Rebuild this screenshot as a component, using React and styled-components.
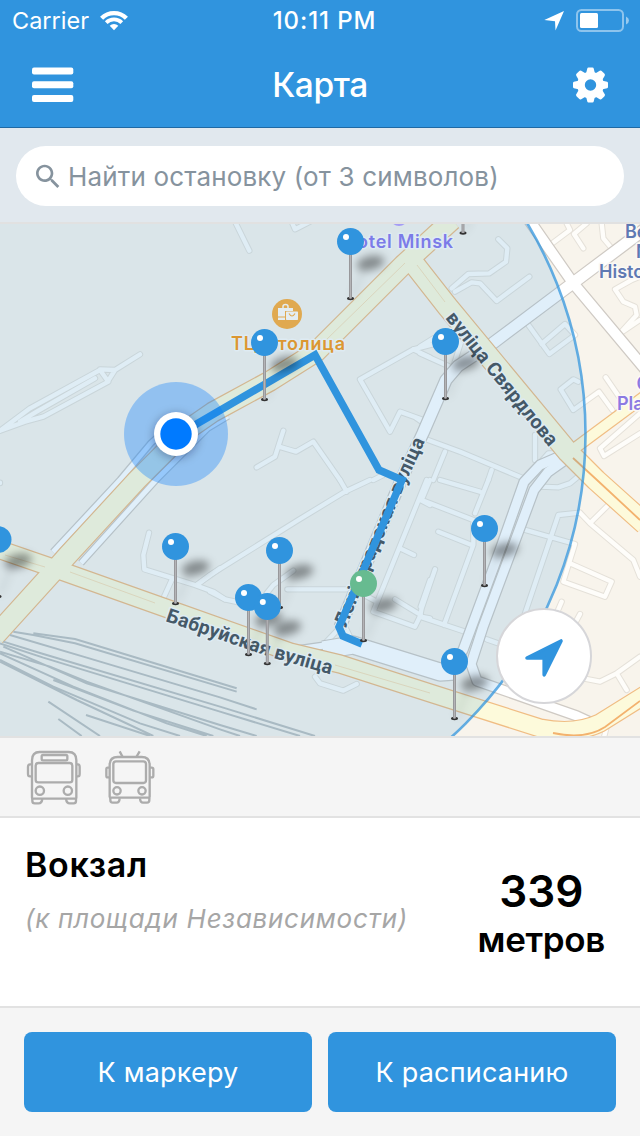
import React from "react";
import styled, { createGlobalStyle } from "styled-components";

const GlobalStyle = createGlobalStyle`
  * { box-sizing: border-box; }
  body { margin: 0; background: #f5f5f5; }
`;

const BLUE = "#3094de";

const Screen = styled.div`
  display: flex;
  flex-direction: column;
  width: 640px;
  height: 1136px;
  overflow: hidden;
  font-family: Inter, "Liberation Sans", sans-serif;
  background: #f5f5f5;
  white-space: nowrap;
`;

const Header = styled.header`
  height: 128px;
  background: ${BLUE};
  border-bottom: 1px solid #2069a3;
  color: #fff;
`;

const StatusBar = styled.div`
  display: grid;
  grid-template-columns: 1fr auto 1fr;
  align-items: center;
  height: 41px;
  padding: 0 11px 0 12px;
  font-size: 24px;
  line-height: 42px;
`;

const StatusSide = styled.div`
  display: flex;
  align-items: center;
  height: 41px;
  gap: ${(p) => p.$gap}px;
  justify-content: ${(p) => (p.$end ? "flex-end" : "flex-start")};
`;

const Carrier = styled.span`
  font-size: 23.5px;
`;

const Clock = styled.span`
  font-weight: 500;
  letter-spacing: 0.9px;
  padding-left: 8px;
`;

const NavBar = styled.div`
  display: grid;
  grid-template-columns: 42px 1fr 36px;
  align-items: center;
  height: 88px;
  padding: 0 32px;
`;

const Title = styled.h1`
  margin: 0;
  padding-right: 6px;
  text-align: center;
  font-size: 33.500px;
  font-weight: 500;
  letter-spacing: -0.4px;
  line-height: 86px;
`;

const IconButton = styled.button`
  display: flex;
  padding: 0;
  border: 0;
  background: none;
  color: inherit;
`;

const SearchBar = styled.div`
  height: 96px;
  padding: 18px 16px 0;
  background: #e1e8ee;
  border-bottom: 2px solid #e1e1e1;
`;

const SearchField = styled.div`
  display: flex;
  align-items: center;
  gap: 4px;
  height: 60px;
  padding-left: 16px;
  border-radius: 30px;
  background: #fff;
  color: #86939e;
  font-size: 26px;
  letter-spacing: 0.15px;
`;

const MapArea = styled.div`
  position: relative;
  height: 512px;
  overflow: hidden;
`;

const MapCanvas = styled.svg`
  display: block;
`;

const LocateButton = styled.button`
  position: absolute;
  right: 48px;
  bottom: 32px;
  width: 96px;
  height: 96px;
  padding: 0;
  border: 2px solid #d6d6d9;
  border-radius: 50%;
  background: #fff;
`;

const TransportRow = styled.div`
  display: flex;
  gap: 24px;
  height: 82px;
  padding: 11px 26px 0;
  border-top: 2px solid #e2e2e2;
  border-bottom: 2px solid #e2e2e2;
`;

const StopCard = styled.section`
  display: flex;
  justify-content: space-between;
  height: 190px;
  padding: 0 35px 0 25px;
  background: #fff;
  border-bottom: 2px solid #e2e2e2;
`;

const StopInfo = styled.div`
  padding-top: 26px;
`;

const StopName = styled.h2`
  margin: 0;
  font-size: 34px;
  line-height: 42px;
  font-weight: 600;
  letter-spacing: 0.7px;
`;

const Direction = styled.p`
  margin: 16px 0 0;
  font-size: 26px;
  line-height: 34px;
  font-style: italic;
  letter-spacing: 0.72px;
  color: #a6a6a6;
`;

const Distance = styled.div`
  padding-top: 47px;
  text-align: center;
  font-weight: 600;
`;

const DistanceValue = styled.div`
  font-size: 44px;
  line-height: 52px;
`;

const DistanceUnit = styled.div`
  font-size: 35px;
  line-height: 44px;
  letter-spacing: -0.35px;
`;

const Footer = styled.footer`
  display: flex;
  gap: 16px;
  padding: 24px;
  height: 128px;
`;

const ActionButton = styled.button`
  flex: 1;
  height: 80px;
  padding: 0;
  border: 0;
  border-radius: 8px;
  background: ${BLUE};
  color: #fff;
  font: 400 27px Inter, "Liberation Sans", sans-serif;
  letter-spacing: 0.2px;
`;

const WifiIcon = () => (
  <svg width="28" height="22" viewBox="101 10 28 22" fill="none" stroke="#fff">
    <path d="M102.6 18.2a17.6 17.6 0 0 1 24.8 0" strokeWidth="4.4" />
    <path d="M107.2 22.6a11.2 11.2 0 0 1 15.6 0" strokeWidth="3.8" />
    <path d="M115 30.2l-4.3-4.5a6.3 6.3 0 0 1 8.6 0z" fill="#fff" stroke="none" />
  </svg>
);

const StatusArrow = () => (
  <svg width="20" height="20" viewBox="544 11 20 20" fill="#fff">
    <path d="M564 11L555.5 30.6L555 21.2L544.3 20z" />
  </svg>
);

const Battery = () => (
  <svg width="53" height="24" viewBox="576 9 53 24">
    <rect x="577" y="10" width="46" height="21" rx="4.5" fill="none" stroke="#fff" strokeOpacity=".45" strokeWidth="2" />
    <rect x="580" y="13" width="18" height="15" rx="1.5" fill="#fff" />
    <path d="M626 16.5q3 1.5 3 4t-3 4z" fill="#fff" fillOpacity=".5" />
  </svg>
);

const MenuIcon = () => (
  <svg width="42" height="36" viewBox="0 0 42 36" fill="#fff">
    <rect y=".5" width="41.3" height="7" rx="2" />
    <rect y="14.3" width="41.3" height="7" rx="2" />
    <rect y="28" width="41.3" height="7" rx="2" />
  </svg>
);

const GearIcon = () => (
  <svg width="36" height="36" viewBox="-18.500 -18 36 36" fill="#fff">
    <circle r="9.500" fill="none" stroke="#fff" strokeWidth="7.600" />
    {[0, 90, 180, 270].map((a) => (
      <path key={a} transform={`rotate(${a})`} d="M-4.6 -11L-3.2 -16.6Q-3 -17.5 -2 -17.5H2Q3 -17.5 3.2 -16.6L4.6 -11z" />
    ))}
    {[45, 135, 225, 315].map((a) => (
      <path key={a} transform={`rotate(${a})`} d="M-5 -11L-3.5 -16.6Q-3 -17.8 -2 -17.8H2Q3 -17.8 3.5 -16.6L5 -11z" />
    ))}
  </svg>
);

const SearchIcon = () => (
  <svg width="32" height="32" viewBox="0 -.500 24 24" fill="currentColor">
    <path d="M15.5 14h-.79l-.28-.27C15.41 12.59 16 11.11 16 9.5 16 5.91 13.09 3 9.5 3S3 5.91 3 9.5 5.91 16 9.5 16c1.61 0 3.09-.59 4.23-1.57l.27.28v.79l5 4.99L20.49 19l-4.99-5zm-6 0C7.01 14 5 11.99 5 9.5S7.01 5 9.5 5 14 7.01 14 9.5 11.99 14 9.5 14z" />
  </svg>
);

const BusIcon = () => (
  <svg width="55" height="56" viewBox="78 42 165 168" fill="none" stroke="#acacac" strokeWidth="7">
    <path d="M96 188V76Q96 51 119 51H206Q229 51 229 76V188Q229 191 225 191H100Q96 191 96 188z" />
    <rect x="125" y="60" width="77" height="16" rx="4" />
    <rect x="107" y="84" width="110" height="58" rx="8" />
    <circle cx="119.500" cy="167" r="12.500" />
    <circle cx="203.500" cy="167" r="12.500" />
    <path d="M96 88H90Q84 88 84 96V116Q84 124 90 124H96M229 88H234Q239 88 239 96V116Q239 124 234 124H229" />
    <path d="M97 190V198Q97 205 104 205H116Q125 205 127 192M228 190V198Q228 205 221 205H209Q200 205 198 192" />
  </svg>
);

const TrolleyIcon = () => (
  <svg width="50" height="56" viewBox="315 42 150 168" fill="none" stroke="#acacac" strokeWidth="7">
    <path d="M329 185V90Q329 66 353 66H425Q449 66 449 90V185Q449 188 445 188H333Q329 188 329 185z" />
    <rect x="340" y="79" width="98" height="65" rx="8" />
    <circle cx="351" cy="167.500" r="11" />
    <circle cx="426" cy="167.500" r="11" />
    <path d="M359 49L368 66M419 49L409 66M329 98H323Q319 98 319 103V122Q319 127 323 127H329M449 98H455Q460 98 460 103V122Q460 127 455 127H449" />
    <path d="M331 188V195Q331 203 338 203H350Q358 203 359 190M448 188V195Q448 203 441 203H429Q421 203 420 190" />
  </svg>
);

const LocateIcon = () => (
  <svg width="92" height="92" viewBox="498 611 92 92">
    <path d="M561 642L544.2 675.8V659H527z" fill={BLUE} stroke={BLUE} strokeWidth="3.600" strokeLinejoin="round" />
  </svg>
);

/* Streets are stored per survey sheet, three units to a pixel. */
const sheets = [
  {
    x: 0, y: 220, w: 13,
    d: "M0 632L90 565L300 450L325 485L130 590L75 605L0 632M60 605L110 575L285 475M300 448L345 450L420 403M345 450L325 482",
  },
  {
    x: 210, y: 220, w: 13,
    d: "M75 5L118 92M245 5L255 28L300 5M700 365L610 388L450 478L540 635L570 575L640 600M610 388L660 412M140 742L195 710L220 632M207 680L258 695L310 665L390 780M490 780L520 765",
  },
  {
    x: 420, y: 220, w: 13,
    d: "M235 58L262 85L258 125L208 160L145 162L95 205M105 215L155 187L180 190L230 243L328 170M318 305L388 402L465 345L435 312L365 372M475 485L460 478L422 508L460 570L537 515L577 570M557 472L597 530M390 75L450 30L440 10M490 85L462 42L500 10M545 10L550 55L575 85M660 170L635 180L585 208L610 245L645 260L650 285L600 340L660 300M660 580L540 685L552 708L660 640M0 400L85 438M0 380L40 355M125 360L100 440M10 655L120 695L310 775M75 695L40 780M215 750L205 780M345 645L345 720M350 740L385 700L430 700M-10 595L12 610",
  },
  {
    x: 0, y: 480, w: 13,
    d: "M447 158L430 225L433 268L585 315L640 335L675 358M515 300L490 355M590 315L660 265M0 8L0 9",
  },
  {
    x: 210, y: 480, w: 13,
    d: "M-40 315L0 285L265 120L405 35L480 0M390 0L410 35M0 335L45 358L100 370M170 340L190 315L250 272M232 328L430 328L500 365M650 0L490 395L615 440L632 405L555 358M632 410L660 415M632 380L660 300M570 205L612 225M635 62L660 75M315 590L330 610L400 632L440 612M378 455L340 495M405 440L430 490",
  },
  {
    x: 420, y: 480, w: 13,
    d: "M30 0L5 60L160 120M205 0L165 100M60 0L180 35M55 155L155 195M160 130L160 195L72 435M45 268L5 385L0 410L150 460M310 148L465 192L430 305L555 350L575 305L450 250M480 98L415 105L315 400M200 478L240 492M565 75L510 130L480 98M510 130L640 240L660 290M425 365L410 400M480 402L465 430M490 595L540 605L590 580L660 530M590 580L620 630M550 780L560 740M360 20L415 22L450 10L480 -15",
  },
];

const streets = [
  { w: 5, d: "M53 552L120 480L151 443L160 435" },
  { w: 5, d: "M81 563L156 480L208 428L228 416" },
  { w: 10, d: "M527 217L573 283L645 369" },
  { w: 11, d: "M645 229L573 283L493 343L458 366L446 380L423 433L402 478L340 627" },
  { w: 9, d: "M570 452L540 465L524 482L500 550L463 650L450 672" },
  { w: 9, d: "M572 455L548 472L534 490L483 627L471 664L477 681L577 716L590 722" },
  { w: 17, d: "M323 650L353 645L440 672L455 671" },
  { w: 6, d: "M293 650L335 644" },
];

const avenues = [
  { w: 19, d: "M-5 636L53 572L67 556L137 480L187 430L213 412L270 381L316 352L403 265L452 220" },
  { w: 20, d: "M411 260L447 306L568 452L596 480L645 524" },
  { w: 17, d: "M-5 548L53 568L160 606L290 652L340 664L430 693L540 728Q575 735 600 723L645 695" },
  { w: 10, d: "M575 448L645 396" },
];

const rails =
  "M40 455L100 465L225 490L710 635M100 460L225 477L710 625M30 465L250 530L660 652L770 688M10 485L130 522L660 680L945 768M0 490L130 533L660 695L900 768M10 500L260 610L660 735L770 768M0 515L150 560L260 605L660 748L720 768M0 520L220 620L500 730L620 768M0 540L160 620L420 730L540 768M0 545L230 660L460 768M145 665L300 768M175 717L245 768M258 705L450 768M160 600L400 692L640 768";

const pins = [
  { x: 463, y: 176 },
  { x: 350.5, y: 241.5 },
  { x: 264.5, y: 342.5 },
  { x: 445.5, y: 341.5 },
  { x: 484.5, y: 528.5 },
  { x: -2, y: 539.5 },
  { x: 175.5, y: 546.5 },
  { x: 279.5, y: 550.5 },
  { x: 363.5, y: 583.5, color: "#67bb90" },
  { x: 248.5, y: 597.5 },
  { x: 267.3, y: 606.5 },
  { x: 454.5, y: 661.5 },
];

const MapLabel = styled.text`
  font-family: ${(p) => (p.$street ? "Roboto, " : "")}Inter, "Liberation Sans", sans-serif;
  font-size: ${(p) => p.$size || 18}px;
  font-weight: ${(p) => (p.$street ? 700 : 600)};
  fill: ${(p) => p.$color || "#455968"};
  stroke: ${(p) => p.$halo || "#deebf3"};
  stroke-width: 3px;
  stroke-linejoin: round;
  paint-order: stroke;
`;

const PinShadow = ({ x, y }) => (
  <g transform={`translate(${x} ${y})`} filter="url(#soft)">
    <ellipse cx="20" cy="21.500" rx="14" ry="7" transform="rotate(-12 20 21.500)" fill="#000" fillOpacity=".4" />
    <path d="M2 55L14 26" stroke="#000" strokeOpacity=".12" strokeWidth="3" />
  </g>
);

const Pin = ({ x, y, color = BLUE }) => (
  <g transform={`translate(${x} ${y})`}>
    <ellipse cy="57" rx="3.500" ry="1.700" fill="#333" />
    <rect x="-1.500" y="12" width="3" height="45" fill="#98989b" />
    <rect x="-.5" y="12" width="1" height="45" fill="#b4b4b7" />
    <circle r="13.500" fill={color} />
    <circle cx="-4.500" cy="-4.500" r="3" fill="#fff" />
  </g>
);

const Strokes = ({ items, extra, color }) =>
  items.map((s) => (
    <path key={s.d} d={s.d} stroke={color} strokeWidth={s.w + extra} />
  ));

const SheetStrokes = ({ extra, color }) =>
  sheets.map((s) => (
    <path
      key={s.d}
      d={s.d}
      transform={`translate(${s.x} ${s.y}) scale(.33333)`}
      stroke={color}
      strokeWidth={s.w + extra}
      strokeLinecap="round"
    />
  ));

const CityMap = () => (
  <MapCanvas width="640" height="512" viewBox="0 224 640 512">
    <defs>
      <filter id="soft" x="-50%" y="-50%" width="200%" height="200%">
        <feGaussianBlur stdDeviation="4" />
      </filter>
      <path id="babr" d="M165 621L273 658L340 677" />
      <path id="len" d="M346 628L404 487L430 430" />
      <path id="svyard" d="M445 318Q500 388 548 446L556 456" />
    </defs>
    <rect y="220" width="640" height="520" fill="#f8f4ec" />
    <g fill="none" strokeLinejoin="round">
      <SheetStrokes extra={6} color="#e5e1d9" />
      <SheetStrokes extra={0} color="#fefdfa" />
      <Strokes items={streets} extra={2.4} color="#cfcac4" />
      <Strokes items={streets} extra={0} color="#ffffff" />
      <Strokes items={avenues} extra={2.4} color="#f0bd84" />
      <Strokes items={avenues} extra={0} color="#fdfadb" />
      <g stroke="#f3cfa0" strokeWidth="1">
        <path d="M325 341L405 263M417 265L445 302M5 555L45 567M70 572L155 603M335 665L430 693" strokeOpacity=".6" />
        <path d="M573 458L597 480L640 520M553 733Q585 740 605 727L640 701" stroke="#f3b26e" strokeWidth="1.800" />
      </g>
    </g>
    <circle cx="176" cy="434" r="409" fill={BLUE} fillOpacity=".15" />
    <circle cx="176" cy="434" r="409.500" fill="none" stroke={BLUE} strokeOpacity=".75" strokeWidth="2.600" />
    <path
      d={rails}
      transform="translate(0 480) scale(.33333)"
      fill="none"
      stroke="#a9bac3"
      strokeWidth="6"
    />

    <circle cx="399" cy="217" r="9" fill="#a49cf5" />
    <MapLabel x="343" y="247.500" textLength="110" $color="#7c7be8">Hotel Minsk</MapLabel>
    <circle cx="287" cy="314" r="15" fill="#e0a950" />
    <g fill="#e4edf2">
      <path d="M278 308h15v3h-8v5.500h-7zM278 317.500h7v2.500h-7z" />
      <path d="M283 308v-1.500q0-2 2.500-2t2.500 2v1.500" fill="none" stroke="#e4edf2" strokeWidth="1.500" />
      <rect x="286" y="311.500" width="12" height="8.500" rx=".7" />
      <path d="M289 313.500q3 5 6 0" fill="none" stroke="#e0a950" strokeWidth="1.200" />
    </g>
    <MapLabel x="231" y="350" textLength="114" $color="#dc9732">ТЦ Столица</MapLabel>
    <MapLabel $street $size={19.5}>
      <textPath href="#svyard" textLength="166">вуліца Свярдлова</textPath>
    </MapLabel>
    <MapLabel $street $size={19.5}>
      <textPath href="#babr" textLength="174">Бабруйская вуліца</textPath>
    </MapLabel>
    <MapLabel $street $size={19.5}>
      <textPath href="#len" textLength="203">Ленінградская вуліца</textPath>
    </MapLabel>
    <g>
      <MapLabel x="625" y="237.500" $color="#5f79b3" $halo="#fbf9f5">Be</MapLabel>
      <MapLabel x="636" y="257.500" $color="#5f79b3" $halo="#fbf9f5">N</MapLabel>
      <MapLabel x="599" y="277.500" $color="#5f79b3" $halo="#fbf9f5">Histo</MapLabel>
      <MapLabel x="636.500" y="390" $color="#8c7ae2" $halo="#fbf9f5">C</MapLabel>
      <MapLabel x="617" y="409.500" $color="#8c7ae2" $halo="#fbf9f5">Pla</MapLabel>
    </g>

    <path
      d="M176 436L315 355L379 470L402 480L339 627L343 636L362 644"
      fill="none"
      stroke={BLUE}
      strokeWidth="7.500"
    />
    <circle cx="176" cy="434" r="52" fill="#007aff" fillOpacity=".33" />
    <circle cx="176" cy="436" r="23" fill="#003" fillOpacity=".28" filter="url(#soft)" />
    <circle cx="176" cy="434" r="22" fill="#fff" />
    <circle cx="176" cy="434" r="15.700" fill="#007aff" />

    {pins.map((p) => (
      <PinShadow key={`${p.x}-${p.y}`} {...p} />
    ))}
    {pins.map((p) => (
      <Pin key={`${p.x}-${p.y}`} {...p} />
    ))}
  </MapCanvas>
);

export default function App() {
  return (
    <Screen>
      <GlobalStyle />
      <Header>
        <StatusBar>
          <StatusSide $gap={11}>
            <Carrier>Carrier</Carrier>
            <WifiIcon />
          </StatusSide>
          <Clock>10:11 PM</Clock>
          <StatusSide $gap={12} $end>
            <StatusArrow />
            <Battery />
          </StatusSide>
        </StatusBar>
        <NavBar>
          <IconButton aria-label="Меню"><MenuIcon /></IconButton>
          <Title>Карта</Title>
          <IconButton aria-label="Настройки"><GearIcon /></IconButton>
        </NavBar>
      </Header>
      <SearchBar>
        <SearchField>
          <SearchIcon />
          <span>Найти остановку (от 3 символов)</span>
        </SearchField>
      </SearchBar>
      <MapArea>
        <CityMap />
        <LocateButton aria-label="Моё местоположение"><LocateIcon /></LocateButton>
      </MapArea>
      <TransportRow>
        <BusIcon />
        <TrolleyIcon />
      </TransportRow>
      <StopCard>
        <StopInfo>
          <StopName>Вокзал</StopName>
          <Direction>(к площади Независимости)</Direction>
        </StopInfo>
        <Distance>
          <DistanceValue>339</DistanceValue>
          <DistanceUnit>метров</DistanceUnit>
        </Distance>
      </StopCard>
      <Footer>
        <ActionButton>К маркеру</ActionButton>
        <ActionButton>К расписанию</ActionButton>
      </Footer>
    </Screen>
  );
}
